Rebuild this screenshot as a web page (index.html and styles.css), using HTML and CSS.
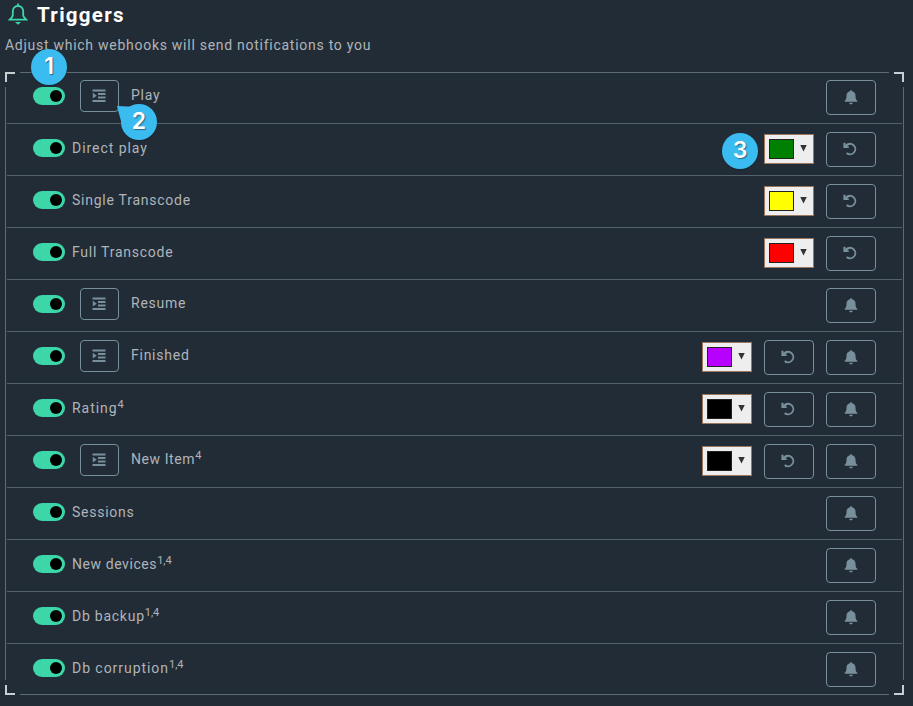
FILE: index.html
```
<!DOCTYPE html>
<html lang="en">
<head>
<meta charset="utf-8">
<title>Triggers</title>
<link rel="stylesheet" href="styles.css">
</head>
<body>
<svg class="sprite" aria-hidden="true">
  <symbol id="bell" viewBox="0 0 14 15"><path d="M7 .3c.7 0 1 .4 1 1 2.200.5 3.500 2.100 3.500 4.200 0 3 .5 4.300 1.800 5.300v1H.7v-1c1.300-1 1.800-2.300 1.800-5.300 0-2.100 1.300-3.700 3.500-4.200 0-.6.3-1 1-1zM5.200 12.700h3.600c-.1 1-.8 1.600-1.800 1.600s-1.700-.6-1.800-1.600z"/></symbol>
  <symbol id="undo" viewBox="0 0 14 14"><path d="M.4.700v5.400h5.400V4.400H4.200A4.100 4.100 0 1 1 4.500 10.200L3 11.700A6.200 6.200 0 1 0 2.500 2.800V.7z"/></symbol>
  <symbol id="indent" viewBox="0 0 14 14"><path d="M.5.600h13v1.900H.5zM6 4h7.500v1.900H6zM6 7.500h7.500v1.900H6zM.5 11h13v2H.5zM.8 3.800v5.800l4-2.900z"/></symbol>
</svg>
<header class="heading">
  <svg class="heading-icon" viewBox="0 0 20 22"><path d="M10 3C6.700 3 4.800 5.400 4.800 8.500v3.800c0 1.600-.9 2.400-3.100 4.300h16.600c-2.200-1.900-3.100-2.700-3.100-4.300V8.500C15.200 5.400 13.300 3 10 3zM10 .6V3"/><path class="solid" d="M7 19h6L10 21.800z"/></svg>
  <h1>Triggers</h1>
</header>
<p class="intro">Adjust which webhooks will send notifications to you</p>
<main class="panel" id="panel"></main>
<div class="callout one">1</div>
<div class="callout two"><svg viewBox="0 0 24 24"><path d="M0 0l22 1L5 19z"/></svg><span>2</span></div>
<div class="callout three">3</div>
<script src="app.js"></script>
</body>
</html>
```
FILE: styles.css
```
* { box-sizing: border-box; }
body {
  margin: 0;
  padding: 0 9px 0 5px;
  height: 706px;
  overflow: hidden;
  background: #212c37;
  color: #b0b4b9;
  font: 14px/20px Roboto, "Liberation Sans", sans-serif;
}
.sprite { position: absolute; width: 0; height: 0; }
.heading { display: flex; align-items: center; height: 30px; padding-left: 2px; }
.heading-icon { width: 20px; height: 22px; margin: -2px 9px 0 1px; fill: none; stroke: #3dd6a8; stroke-width: 1.8; }
.heading-icon .solid { fill: #3dd6a8; stroke: none; }
h1 { margin: 0; color: #fff; font-size: 20.500px; line-height: 30px; font-weight: 700; letter-spacing: 1.300px; }
.intro { margin: 5px 0 17px; letter-spacing: .73px; white-space: nowrap; }
.panel {
  --c: #c7cdd0;
  --l: #5c6c76;
  height: 623px;
  background:
    linear-gradient(var(--c), var(--c)) 0 0 / 10px 2px,
    linear-gradient(var(--c), var(--c)) 0 0 / 2px 10px,
    linear-gradient(var(--c), var(--c)) 100% 0 / 10px 2px,
    linear-gradient(var(--c), var(--c)) 100% 0 / 2px 10px,
    linear-gradient(var(--c), var(--c)) 0 100% / 10px 2px,
    linear-gradient(var(--c), var(--c)) 0 100% / 2px 10px,
    linear-gradient(var(--c), var(--c)) 100% 100% / 10px 2px,
    linear-gradient(var(--c), var(--c)) 100% 100% / 2px 10px,
    linear-gradient(var(--l), var(--l)) 50% 0 / calc(100% - 30px) 1px,
    linear-gradient(var(--l), var(--l)) 50% 100% / calc(100% - 30px) 1px,
    linear-gradient(var(--l), var(--l)) 0 50% / 1px calc(100% - 30px),
    linear-gradient(var(--l), var(--l)) 100% 50% / 1px calc(100% - 30px);
  background-repeat: no-repeat;
}
.row {
  display: flex;
  align-items: flex-start;
  height: 52px;
  margin: 0 2px;
  padding: 8px 26px 0;
  border-bottom: 1px solid #52616b;
}
.row:last-child { height: 51px; border-bottom: 0; }
.toggle { width: 32px; height: 18px; margin-top: 7px; padding: 3px; border-radius: 9px; background: #3dd6a8; }
.toggle::after { content: ""; display: block; width: 12px; height: 12px; margin-left: 14px; border-radius: 50%; background: #000; }
.btn {
  display: flex;
  align-items: center;
  justify-content: center;
  width: 50px;
  height: 35px;
  padding: 0;
  border: 1px solid #78909c;
  border-radius: 4px;
  background: none;
}
.btn svg { width: 14px; height: 15px; fill: #78909c; }
.btn .undo { height: 14px; margin: -2px 2px 0 0; }
.btn.small { width: 39px; height: 32px; margin-left: 15px; }
.btn.small svg { height: 14px; margin-right: 1px; }
.label { margin: 6px 0 0 7px; letter-spacing: .75px; white-space: nowrap; }
.label.loose { letter-spacing: .95px; }
.label.tight { letter-spacing: .58px; }
.small + .label { margin: 5px 0 0 12px; }
sup { font-size: 11px; line-height: 0; vertical-align: 5px; letter-spacing: 0; }
.actions { display: flex; gap: 12px; margin-left: auto; }
.color {
  display: flex;
  align-items: center;
  gap: 6px;
  width: 50px;
  height: 30px;
  margin-top: 2px;
  padding-left: 4px;
  border: 1px solid #9a765c;
  background: #eee;
}
.swatch { width: 25px; height: 20px; border: 1px solid #222; }
.caret { width: 7px; height: 7px; margin-top: -2px; background: #333; clip-path: polygon(0 0, 100% 0, 50% 100%); }
.callout {
  position: absolute;
  width: 36px;
  height: 36px;
  border-radius: 50%;
  background: #3bbcf0;
  box-shadow: 0 1px 1px #1a2731;
  color: #fff;
  font: 600 23px/34px Inter, sans-serif;
  text-align: center;
  text-shadow: 1px 1px 1px #26688a;
}
.one { left: 31px; top: 49px; }
.two { left: 121px; top: 104px; }
.three { left: 722px; top: 133px; }
.two svg { position: absolute; left: -4px; top: 2px; width: 24px; height: 24px; fill: #3bbcf0; }
.two span { position: relative; }
```
FILE: app.js
```
const rows = [
  { name: "Play", nested: true, bell: true },
  { name: "Direct play", color: "#008000", spacing: "loose" },
  { name: "Single Transcode", color: "#ffff00" },
  { name: "Full Transcode", color: "#ff0000" },
  { name: "Resume", nested: true, bell: true },
  { name: "Finished", nested: true, color: "#b800ff", bell: true },
  { name: "Rating", note: "4", color: "#000000", bell: true, spacing: "loose" },
  { name: "New Item", note: "4", nested: true, color: "#000000", bell: true, spacing: "tight" },
  { name: "Sessions", bell: true },
  { name: "New devices", note: "1,4", bell: true, spacing: "tight" },
  { name: "Db backup", note: "1,4", bell: true },
  { name: "Db corruption", note: "1,4", bell: true, spacing: "loose" }
];
const button = (icon, extra = "") =>
  `<button class="btn ${extra}"><svg class="${icon}"><use href="#${icon}"/></svg></button>`;
document.getElementById("panel").innerHTML = rows.map(r => `
  <div class="row">
    <span class="toggle"></span>
    ${r.nested ? button("indent", "small") : ""}
    <span class="label ${r.spacing || ""}">${r.name}${r.note ? `<sup>${r.note}</sup>` : ""}</span>
    <div class="actions">
      ${r.color ? `<span class="color"><span class="swatch" style="background:${r.color}"></span><span class="caret"></span></span>${button("undo")}` : ""}
      ${r.bell ? button("bell") : ""}
    </div>
  </div>`).join("");
```
